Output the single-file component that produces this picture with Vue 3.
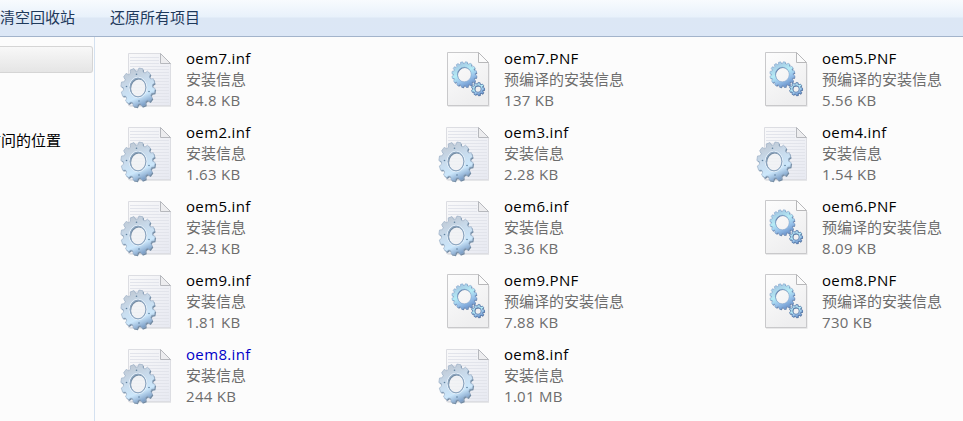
<template>
  <div class="explorer">
    <svg class="defs" width="0" height="0">
      <defs>
        <linearGradient id="paper" x1="0" y1="0" x2="1" y2="1">
          <stop offset="0" stop-color="#f9f9fa" />
          <stop offset="1" stop-color="#e7e9f1" />
        </linearGradient>
        <linearGradient id="sheet" x1="0" y1="0" x2="0.5" y2="1">
          <stop offset="0" stop-color="#fdfdfd" />
          <stop offset="1" stop-color="#eeeeef" />
        </linearGradient>
        <linearGradient id="metal" x1="0.2" y1="0" x2="0.6" y2="1">
          <stop offset="0" stop-color="#bec6d0" />
          <stop offset="0.4" stop-color="#c8daeb" />
          <stop offset="0.75" stop-color="#cce7fb" />
          <stop offset="1" stop-color="#7598c2" />
        </linearGradient>
        <linearGradient id="blue" x1="0.2" y1="0" x2="0.7" y2="1">
          <stop offset="0" stop-color="#9fbede" />
          <stop offset="0.45" stop-color="#b5ecf6" />
          <stop offset="0.7" stop-color="#98c2ea" />
          <stop offset="1" stop-color="#648cc7" />
        </linearGradient>
        <pattern id="lines" width="4" height="3" patternUnits="userSpaceOnUse">
          <rect width="4" height="1" fill="#e2e4eb" />
        </pattern>

        <symbol id="icon-inf" viewBox="0 0 56 63">
          <path d="M11.5 6.5H43l10 10V59H11.5Z" fill="#d0d1d5" opacity="0.5" />
          <path d="M10.5 5.5H42.5L52.5 15.5V57.5H10.5Z" fill="url(#paper)" stroke="#dcdde2" />
          <path d="M12 8H41V17H51V56H12Z" fill="url(#lines)" />
          <path d="M42.5 5.5V15.5H52.5Z" fill="#ededef" stroke="#b6b8bd" />
          <ellipse cx="20" cy="39.5" rx="9" ry="10" fill="#f1f2f5" opacity="0.8" />
          <path :d="bigGear" transform="translate(0.9 1.3)" fill="#54728f" opacity="0.8" fill-rule="evenodd" />
          <path :d="bigGear" fill="url(#metal)" stroke="#93aac3" stroke-width="0.6" fill-rule="evenodd" />
          <ellipse cx="20" cy="39.5" rx="8.9" ry="10.3" fill="none" stroke="#e4eff9" stroke-width="1" />
          <ellipse cx="20" cy="39.5" rx="7.9" ry="9.4" fill="none" stroke="#869fba" stroke-width="0.9" />
          <g fill="#5f819f">
            <circle cx="18.5" cy="26.3" r="0.8" />
            <circle cx="31" cy="43.5" r="0.8" />
            <circle cx="8.5" cy="38.5" r="0.8" />
            <circle cx="21" cy="53" r="0.8" />
          </g>
        </symbol>

        <symbol id="icon-pnf" viewBox="0 0 56 63">
          <path d="M12 6H43l10.5 10.5V58.7H12Z" fill="#c9c9cb" opacity="0.5" />
          <path d="M11.5 4.5H42.5L52.5 14.5V57.5H11.5Z" fill="url(#sheet)" stroke="#c9c9cb" />
          <path d="M42.5 4.5V14.5H52.5Z" fill="#fbfbfb" stroke="#b8b8ba" />
          <path :d="midGear" transform="translate(0.6 0.9)" fill="#4b6c9b" opacity="0.85" fill-rule="evenodd" />
          <path :d="midGear" fill="url(#blue)" stroke="#7c9dc6" stroke-width="0.5" fill-rule="evenodd" />
          <path :d="smallGear" transform="translate(0.5 0.7)" fill="#3f608f" opacity="0.85" fill-rule="evenodd" />
          <path :d="smallGear" fill="url(#blue)" stroke="#5a7dad" stroke-width="0.8" fill-rule="evenodd" />
        </symbol>
      </defs>
    </svg>

    <header class="toolbar">
      <span>清空回收站</span>
      <span>还原所有项目</span>
    </header>

    <div class="body">
      <aside class="sidebar">
        <div class="selected"></div>
        <div class="place">访问的位置</div>
      </aside>

      <main class="files">
        <div v-for="(file, i) in files" :key="i" class="file">
          <svg class="icon" width="56" height="63">
            <use :href="file.pnf ? '#icon-pnf' : '#icon-inf'" />
          </svg>
          <div class="info">
            <div class="name" :class="{ compressed: file.compressed }">{{ file.name }}</div>
            <div>{{ file.pnf ? '预编译的安装信息' : '安装信息' }}</div>
            <div class="size">{{ file.size }}</div>
          </div>
        </div>
      </main>
    </div>
  </div>
</template>

<script setup>
const files = [
  { name: 'oem7.inf', size: '84.8 KB' },
  { name: 'oem7.PNF', size: '137 KB', pnf: true },
  { name: 'oem5.PNF', size: '5.56 KB', pnf: true },
  { name: 'oem2.inf', size: '1.63 KB' },
  { name: 'oem3.inf', size: '2.28 KB' },
  { name: 'oem4.inf', size: '1.54 KB' },
  { name: 'oem5.inf', size: '2.43 KB' },
  { name: 'oem6.inf', size: '3.36 KB' },
  { name: 'oem6.PNF', size: '8.09 KB', pnf: true },
  { name: 'oem9.inf', size: '1.81 KB' },
  { name: 'oem9.PNF', size: '7.88 KB', pnf: true },
  { name: 'oem8.PNF', size: '730 KB', pnf: true },
  { name: 'oem8.inf', size: '244 KB', compressed: true },
  { name: 'oem8.inf', size: '1.01 MB' }
];

// Toothed ring with an elliptical hole, filled with the evenodd rule
function gear(cx, cy, rx, ry, teeth, depth, hx, hy) {
  const points = [];
  const profile = [[-0.36, depth], [-0.22, 1], [0.22, 1], [0.36, depth]];
  for (let i = 0; i < teeth; i++) {
    for (const [offset, r] of profile) {
      const a = ((i + offset) / teeth) * Math.PI * 2 - 1.4;
      points.push(`${(cx + Math.cos(a) * rx * r).toFixed(2)} ${(cy + Math.sin(a) * ry * r).toFixed(2)}`);
    }
  }
  return `M${points.join('L')}ZM${cx - hx} ${cy}a${hx} ${hy} 0 1 0 ${hx * 2} 0a${hx} ${hy} 0 1 0 ${-hx * 2} 0Z`;
}

const bigGear = gear(20, 39.5, 17.2, 19.5, 12, 0.85, 7.8, 9.3);
const midGear = gear(28.3, 26.5, 12.5, 12.8, 16, 0.87, 6.9, 7.3);
const smallGear = gear(42, 41, 6.6, 6.6, 9, 0.77, 3.2, 3.3);
</script>

<style>
body {
  margin: 0;
}
</style>

<style scoped>
.explorer {
  width: 963px;
  height: 421px;
  overflow: hidden;
  background: #fcfcfc;
  color: #000;
  font-family: "Open Sans", "Noto Sans CJK SC", sans-serif;
  font-size: 15px;
  line-height: 21px;
}

.defs {
  display: block;
}

.toolbar {
  display: flex;
  gap: 35px;
  box-sizing: border-box;
  height: 37px;
  padding-top: 7px;
  border-bottom: 1px solid #a3b4cb;
  background: linear-gradient(#f8fbfe 0, #e8f1fb 17px, #dce7f5 18px, #dce7f6 100%);
  color: #1e395b;
  white-space: nowrap;
}

.body {
  display: flex;
  height: 384px;
}

.sidebar {
  flex: none;
  box-sizing: border-box;
  width: 95px;
  padding-top: 9px;
  border-right: 1px solid #d4e1f0;
}

.selected {
  box-sizing: border-box;
  width: 93px;
  height: 27px;
  border: 1px solid #d5d5d5;
  border-left: 0;
  border-radius: 0 3px 3px 0;
  background: linear-gradient(#f8f8f8, #e5e5e5);
}

/* scrolled slightly left, the first character sits past the edge */
.place {
  margin: 57px 0 0 -14px;
  white-space: nowrap;
}

.files {
  display: grid;
  flex: none;
  grid-template-columns: repeat(3, 318px);
  grid-auto-rows: 63px;
  row-gap: 11px;
  align-content: start;
  padding: 11px 0 0 23px;
}

.file {
  display: flex;
  gap: 12px;
}

.icon {
  flex: none;
}

.info {
  color: #6d6d6d;
  white-space: nowrap;
}

.info > div {
  height: 21px;
}

.info .name {
  color: #000;
  letter-spacing: 0.35px;
}

.info .compressed {
  color: #0000c8;
}

.size {
  letter-spacing: 0.3px;
}
</style>
